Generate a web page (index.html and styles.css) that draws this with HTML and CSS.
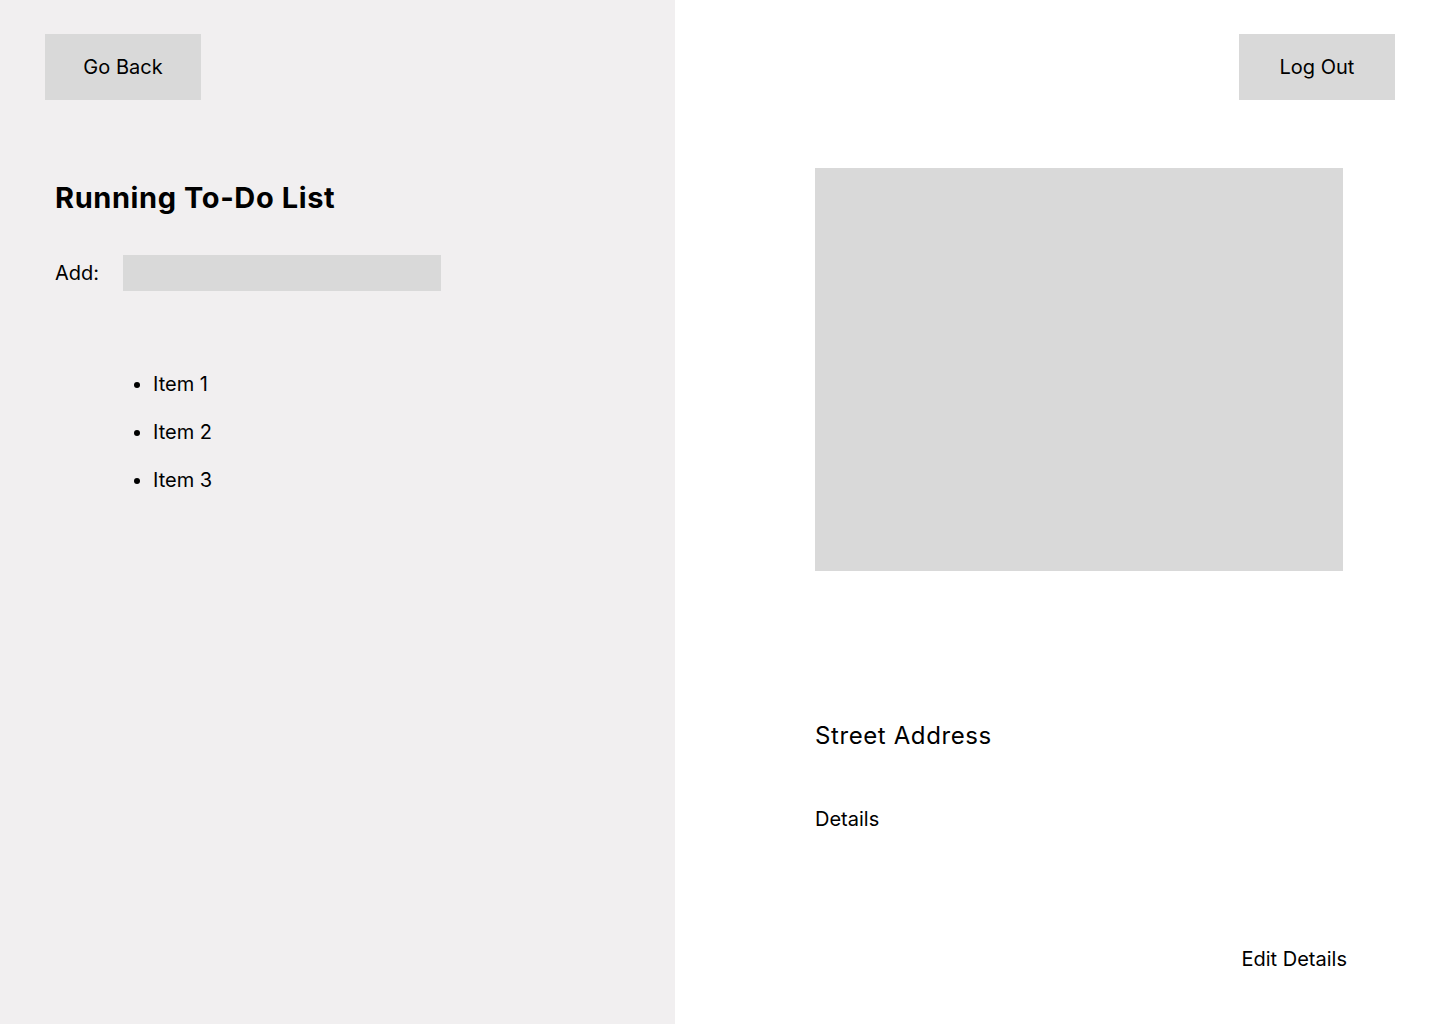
FILE: index.html
```html
<!DOCTYPE html>
<html lang="en">
<head>
<meta charset="utf-8">
<title>Running To-Do List</title>
<link rel="stylesheet" href="styles.css">
</head>
<body>
<div class="page">
  <section class="left">
    <div class="topbar">
      <button class="btn">Go Back</button>
    </div>
    <h1 class="title">Running To-Do List</h1>
    <div class="add-row">
      <label class="add-label" for="add">Add:</label>
      <input class="add-input" id="add" type="text">
    </div>
    <ul class="items">
      <li>Item 1</li>
      <li>Item 2</li>
      <li>Item 3</li>
    </ul>
  </section>
  <section class="right">
    <div class="topbar topbar-right">
      <button class="btn">Log Out</button>
    </div>
    <div class="detail">
      <div class="photo"></div>
      <h2 class="address">Street Address</h2>
      <p class="details">Details</p>
      <div class="edit-row"><a class="edit" href="#">Edit Details</a></div>
    </div>
  </section>
</div>
</body>
</html>
```

FILE: styles.css
```css
* { box-sizing: border-box; }
html, body {
  margin: 0;
  padding: 0;
  height: 100%;
}
body {
  font-family: Inter, "Noto Sans", sans-serif;
  color: #000;
  background: #fff;
}
.page {
  display: flex;
  width: 1440px;
  height: 1024px;
}
.left {
  width: 675px;
  flex: none;
  background: #f1eff0;
  padding: 34px 0 0 0;
}
.right {
  flex: 1;
  background: #fff;
  padding: 34px 0 0 0;
}
.topbar {
  display: flex;
  padding: 0 45px;
}
.topbar-right {
  justify-content: flex-end;
}
.btn {
  width: 156px;
  height: 66px;
  border: none;
  background: #d9d9d9;
  font-family: inherit;
  font-size: 20px;
  color: #000;
  padding: 0;
  cursor: pointer;
}
.title {
  margin: 80px 0 0 55px;
  font-size: 29px;
  line-height: 36px;
  font-weight: 700;
  letter-spacing: 0.6px;
}
.add-row {
  display: flex;
  align-items: center;
  margin: 39px 0 0 55px;
}
.add-label {
  width: 68px;
  font-size: 20px;
  line-height: 36px;
}
.add-input {
  width: 318px;
  height: 36px;
  border: none;
  background: #d9d9d9;
  padding: 0 8px;
  font-family: inherit;
  font-size: 18px;
}
.items {
  margin: 69px 0 0 55px;
  padding: 0 0 0 98px;
  font-size: 20px;
  line-height: 48px;
}
.detail {
  display: flex;
  flex-direction: column;
  width: 532px;
  margin: 68px 0 0 140px;
}
.photo {
  width: 528px;
  height: 403px;
  background: #d9d9d9;
}
.address {
  margin: 150px 0 0 0;
  font-size: 24px;
  line-height: 30px;
  font-weight: 400;
  letter-spacing: 0.6px;
}
.details {
  margin: 56px 0 0 0;
  font-size: 20px;
  line-height: 24px;
}
.edit-row {
  display: flex;
  justify-content: flex-end;
  margin-top: 116px;
}
.edit {
  font-size: 20px;
  line-height: 24px;
  color: #000;
  text-decoration: none;
}
```
